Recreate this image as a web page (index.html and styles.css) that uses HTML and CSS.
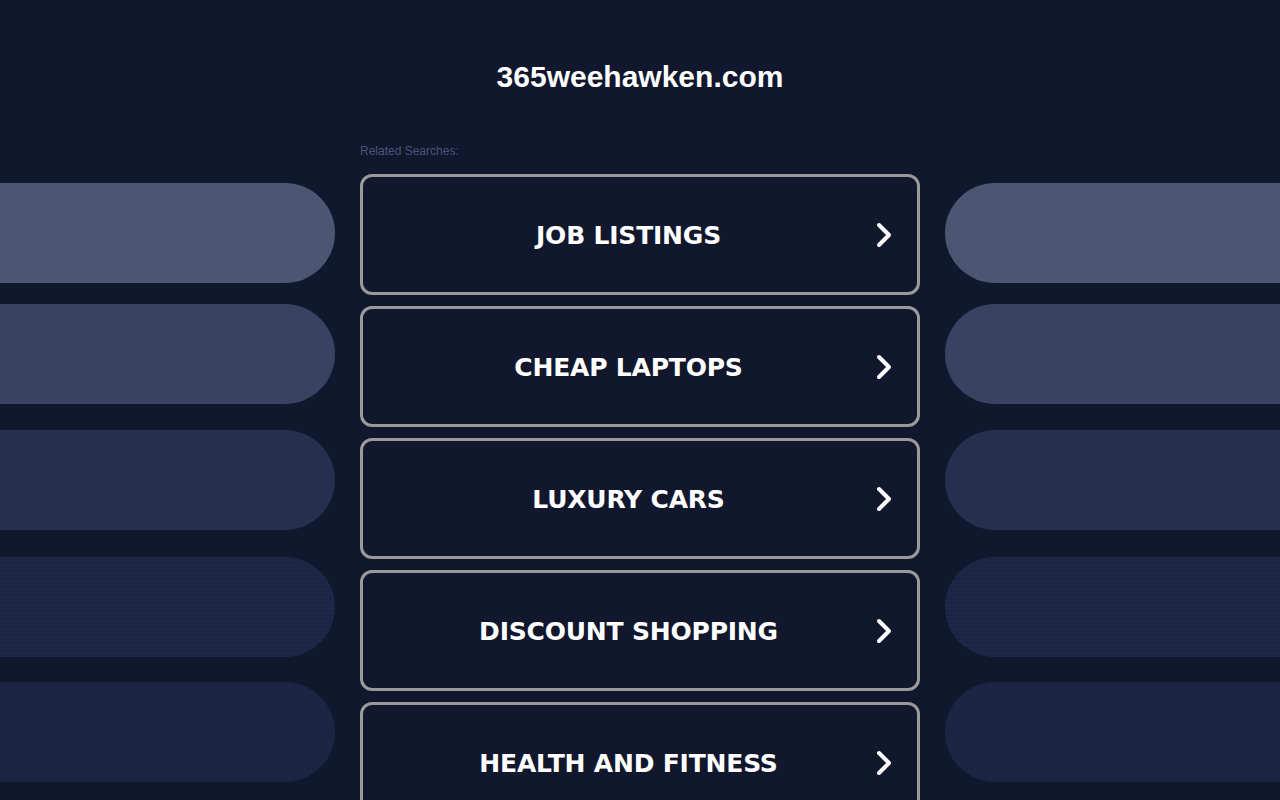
FILE: index.html
```html
<!DOCTYPE html>
<html lang="en">
<head>
<meta charset="utf-8">
<title>365weehawken.com</title>
<link rel="stylesheet" href="styles.css">
</head>
<body>
<header class="header">
  <h1 class="domain">365weehawken.com</h1>
</header>
<div class="layout">
  <div class="side side-left">
    <div class="pill pill-1"></div>
    <div class="pill pill-2"></div>
    <div class="pill pill-3"></div>
    <div class="pill pill-4"></div>
    <div class="pill pill-5"></div>
  </div>
  <main class="center">
    <p class="label">Related Searches:</p>
    <ul class="links">
      <li><a class="link" href="#"><span class="link-text">JOB LISTINGS</span><svg class="chev" viewBox="0 0 18 28" width="18" height="28"><polyline points="4,4 14,14 4,24"/></svg></a></li>
      <li><a class="link" href="#"><span class="link-text">CHEAP LAPTOPS</span><svg class="chev" viewBox="0 0 18 28" width="18" height="28"><polyline points="4,4 14,14 4,24"/></svg></a></li>
      <li><a class="link" href="#"><span class="link-text">LUXURY CARS</span><svg class="chev" viewBox="0 0 18 28" width="18" height="28"><polyline points="4,4 14,14 4,24"/></svg></a></li>
      <li><a class="link" href="#"><span class="link-text">DISCOUNT SHOPPING</span><svg class="chev" viewBox="0 0 18 28" width="18" height="28"><polyline points="4,4 14,14 4,24"/></svg></a></li>
      <li><a class="link" href="#"><span class="link-text">HEALTH AND FITNESS</span><svg class="chev" viewBox="0 0 18 28" width="18" height="28"><polyline points="4,4 14,14 4,24"/></svg></a></li>
    </ul>
  </main>
  <div class="side side-right">
    <div class="pill pill-1"></div>
    <div class="pill pill-2"></div>
    <div class="pill pill-3"></div>
    <div class="pill pill-4"></div>
    <div class="pill pill-5"></div>
  </div>
</div>
</body>
</html>
```

FILE: styles.css
```css
html, body {
  margin: 0;
  padding: 0;
  background: #11172d;
}
body {
  font-family: "Liberation Sans", Arial, sans-serif;
  overflow: hidden;
  height: 800px;
}
.header {
  padding-top: 59px;
  text-align: center;
}
.domain {
  margin: 0;
  font-family: "Liberation Sans", Arial, sans-serif;
  font-weight: bold;
  font-size: 30px;
  line-height: 36px;
  color: #ffffff;
}
.layout {
  margin-top: 48px;
  display: grid;
  grid-template-columns: 335px 560px 335px;
  column-gap: 25px;
}
.side {
  padding-top: 40px;
  display: flex;
  flex-direction: column;
}
.pill {
  height: 100px;
  flex: none;
}
.side-left .pill {
  border-radius: 0 50px 50px 0;
}
.side-right .pill {
  border-radius: 50px 0 0 50px;
}
.pill-2 { margin-top: 21px; }
.pill-3 { margin-top: 26px; }
.pill-4 { margin-top: 27px; }
.pill-5 { margin-top: 25px; }
.pill-1 { background: #4c5673; }
.pill-2 { background: #3a4262; }
.pill-3 { background: #272f4e; }
.pill-4 {
  background-color: #1e2747;
  background-image: radial-gradient(rgba(10, 16, 36, 0.18) 0.7px, transparent 1px);
  background-size: 4px 4px;
}
.pill-5 {
  background-color: #1c2544;
  background-image: radial-gradient(rgba(10, 16, 36, 0.25) 0.7px, transparent 1px);
  background-size: 5px 5px;
}
.label {
  margin: 1px 0 16px;
  font-size: 12px;
  line-height: 14px;
  color: #4a5478;
}
.links {
  list-style: none;
  margin: 0;
  padding: 0;
}
.links li {
  margin-bottom: 11px;
}
.link {
  box-sizing: border-box;
  height: 121px;
  display: flex;
  align-items: center;
  padding: 0 24px 0 19px;
  border: 3px solid #9a9a9a;
  border-radius: 12px;
  text-decoration: none;
  color: #ffffff;
}
.link-text {
  flex: 1;
  text-align: center;
  padding-top: 3px;
  font-family: "DejaVu Sans", Verdana, sans-serif;
  font-weight: bold;
  font-size: 25px;
  letter-spacing: -0.2px;
  line-height: 30px;
  color: #ffffff;
}
.chev {
  flex: none;
  display: block;
}
.chev polyline {
  fill: none;
  stroke: #ffffff;
  stroke-width: 4;
  stroke-linecap: round;
  stroke-linejoin: round;
}
```
